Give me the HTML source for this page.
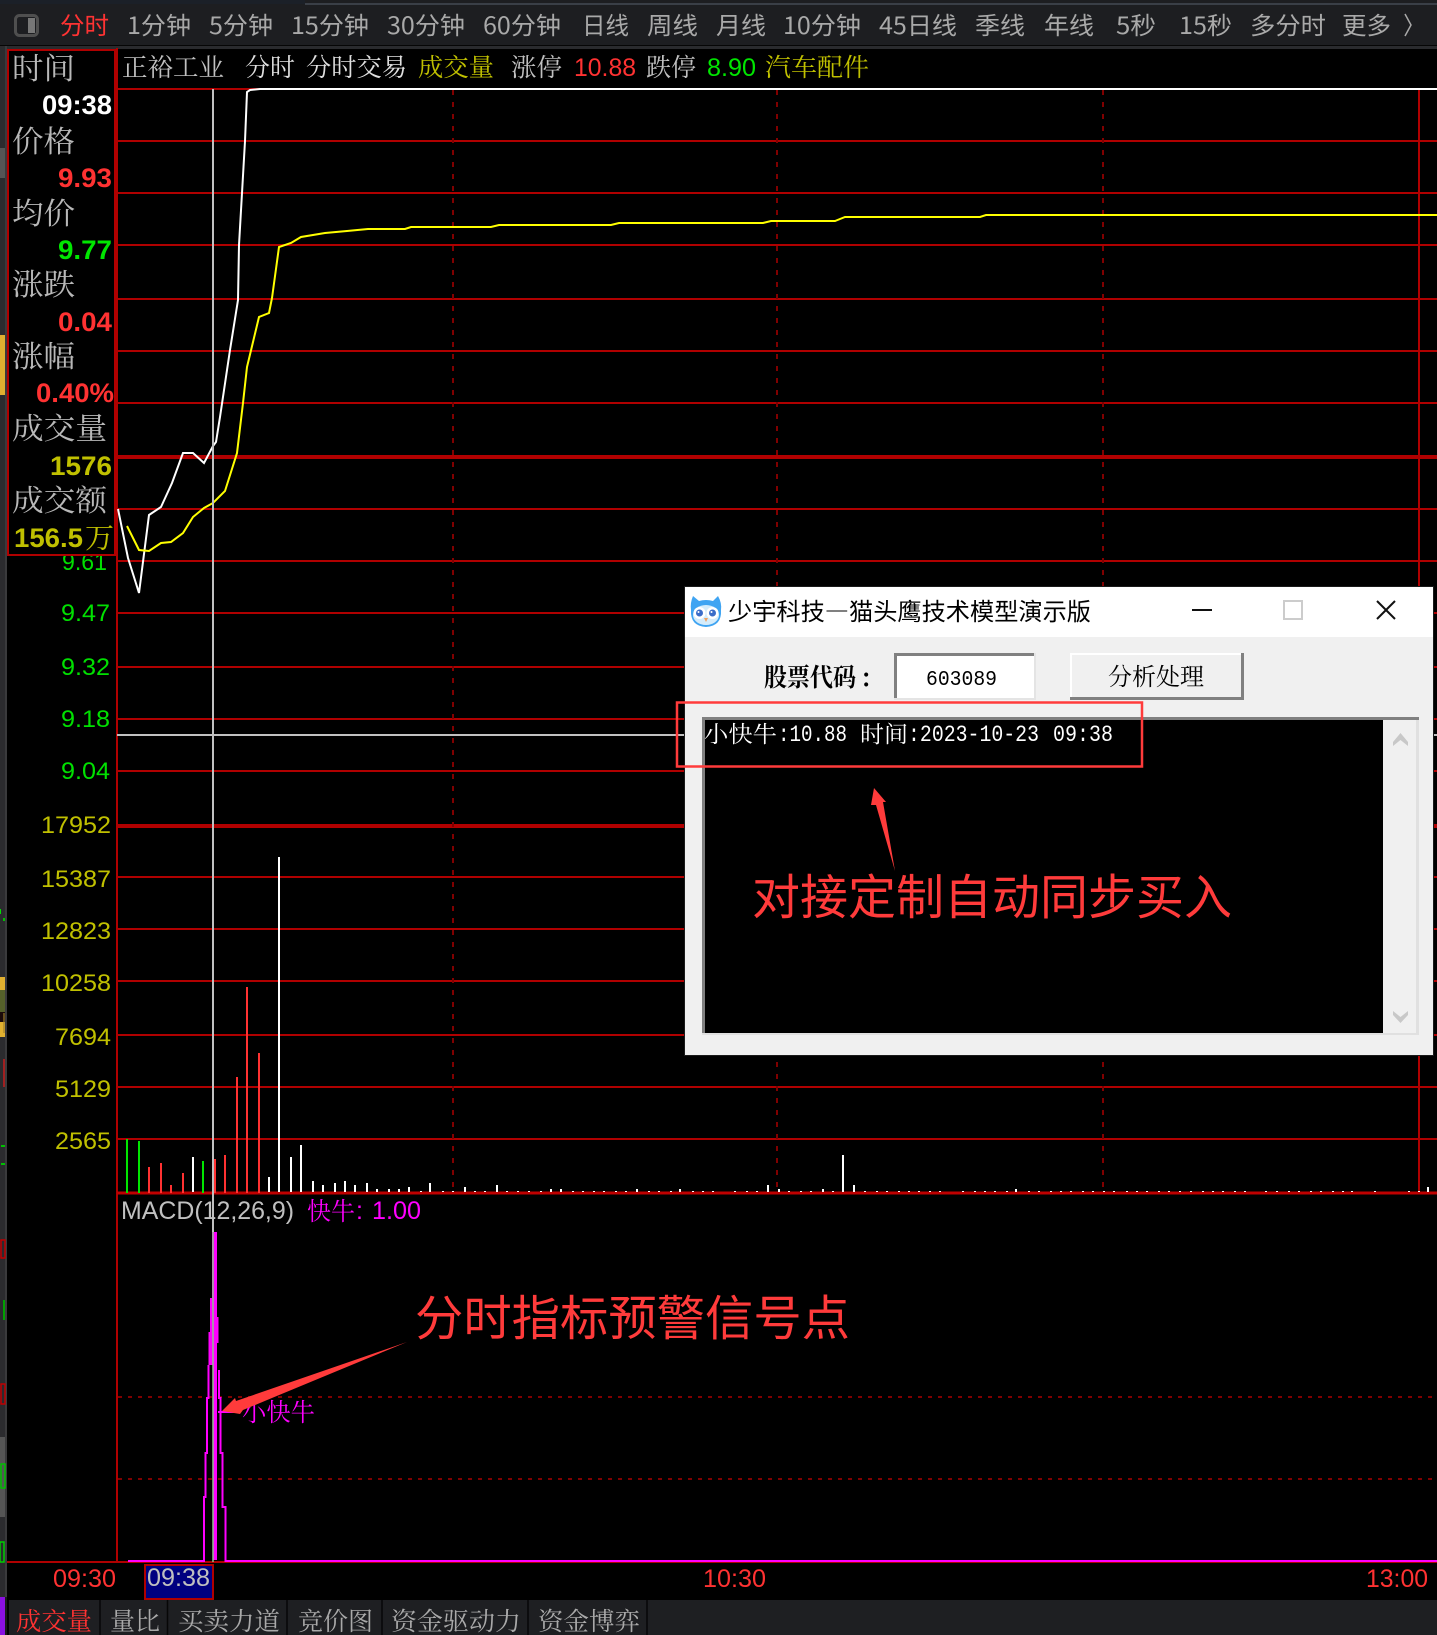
<!DOCTYPE html>
<html lang="zh"><head><meta charset="utf-8"><title>分时</title>
<style>
html,body{margin:0;padding:0;background:#000;width:1437px;height:1635px;overflow:hidden}
svg{display:block}
.s{font-family:"Liberation Sans","Noto Sans CJK SC",sans-serif}
.m{font-family:"Noto Sans CJK SC","WenQuanYi Zen Hei",sans-serif}
.z{font-family:"Noto Serif CJK SC","Noto Sans CJK SC",serif}
.b{font-family:"Liberation Sans",sans-serif;font-weight:bold}
.l{font-family:"Liberation Mono",monospace}
</style></head><body>
<svg xmlns="http://www.w3.org/2000/svg" width="1437" height="1635" viewBox="0 0 1437 1635">
<rect width="1437" height="1635" fill="#000"/>

<!-- toolbar -->
<rect width="1437" height="46" fill="#1d1e21"/>
<rect width="305" height="4" fill="#1b2028"/>
<rect x="305" y="3" width="1132" height="2" fill="#3a3f47"/>
<rect y="45" width="1437" height="1" fill="#060606"/>
<rect y="46" width="1437" height="3" fill="#2a2b2e"/>
<rect x="15.500" y="15.500" width="22" height="20" rx="4" fill="none" stroke="#4f4f4f" stroke-width="3"/>
<rect x="28" y="18" width="7" height="15" fill="#777"/>
<g class="m" font-size="24" fill="#a9a9a9">
<text x="60" y="34" textLength="49" lengthAdjust="spacingAndGlyphs" fill="#ff3333">分时</text>
<text x="127" y="34" textLength="64" lengthAdjust="spacingAndGlyphs">1分钟</text>
<text x="209" y="34" textLength="64" lengthAdjust="spacingAndGlyphs">5分钟</text>
<text x="291" y="34" textLength="78" lengthAdjust="spacingAndGlyphs">15分钟</text>
<text x="387" y="34" textLength="78" lengthAdjust="spacingAndGlyphs">30分钟</text>
<text x="483" y="34" textLength="78" lengthAdjust="spacingAndGlyphs">60分钟</text>
<text x="582" y="34" textLength="47" lengthAdjust="spacingAndGlyphs">日线</text>
<text x="647" y="34" textLength="51" lengthAdjust="spacingAndGlyphs">周线</text>
<text x="716" y="34" textLength="50" lengthAdjust="spacingAndGlyphs">月线</text>
<text x="783" y="34" textLength="78" lengthAdjust="spacingAndGlyphs">10分钟</text>
<text x="879" y="34" textLength="78" lengthAdjust="spacingAndGlyphs">45日线</text>
<text x="975" y="34" textLength="50" lengthAdjust="spacingAndGlyphs">季线</text>
<text x="1044" y="34" textLength="50" lengthAdjust="spacingAndGlyphs">年线</text>
<text x="1116" y="34" textLength="40" lengthAdjust="spacingAndGlyphs">5秒</text>
<text x="1179" y="34" textLength="53" lengthAdjust="spacingAndGlyphs">15秒</text>
<text x="1250" y="34" textLength="76" lengthAdjust="spacingAndGlyphs">多分时</text>
<text x="1342" y="34" textLength="49" lengthAdjust="spacingAndGlyphs">更多</text>
</g>
<path d="M1405 14L1411 25L1405 36" fill="none" stroke="#a9a9a9" stroke-width="1.500"/>

<!-- header row -->
<g font-size="25">
<text class="z" x="122" y="76" textLength="102" lengthAdjust="spacingAndGlyphs" fill="#c0c0c0">正裕工业</text>
<text class="z" x="245" y="76" textLength="50" lengthAdjust="spacingAndGlyphs" fill="#e0e0e0">分时</text>
<text class="z" x="306" y="76" textLength="101" lengthAdjust="spacingAndGlyphs" fill="#e0e0e0">分时交易</text>
<text class="z" x="418" y="76" textLength="76" lengthAdjust="spacingAndGlyphs" fill="#c0c000">成交量</text>
<text class="z" x="511" y="76" textLength="51" lengthAdjust="spacingAndGlyphs" fill="#c0c0c0">涨停</text>
<text class="s" x="574" y="76" textLength="62" lengthAdjust="spacingAndGlyphs" fill="#ff3232">10.88</text>
<text class="z" x="646" y="76" textLength="50" lengthAdjust="spacingAndGlyphs" fill="#c0c0c0">跌停</text>
<text class="s" x="707" y="76" textLength="49" lengthAdjust="spacingAndGlyphs" fill="#00e600">8.90</text>
<text class="z" x="765" y="76" textLength="104" lengthAdjust="spacingAndGlyphs" fill="#c0c000">汽车配件</text>
</g>

<!-- grid -->
<path d="M117 141H1437M117 193H1437M117 245H1437M117 299H1437M117 351H1437M117 403H1437M117 509H1437M117 561H1437M117 613H1437M117 667H1437M117 719H1437M117 771H1437M117 877H1437M117 929H1437M117 981H1437M117 1035H1437M117 1087H1437M117 1139H1437M117 89H260" stroke="#b00000" stroke-width="2" fill="none"/>
<path d="M117 457H1437M117 826H1437" stroke="#b00000" stroke-width="4" fill="none"/>
<path d="M453 90V1190M777 90V1190M1103 90V1190" stroke="#800000" stroke-width="2" stroke-dasharray="5 7" fill="none"/>
<path d="M1419 89V1193" stroke="#b00000" stroke-width="2"/>
<path d="M117 48V1562" stroke="#b00000" stroke-width="2"/>
<path d="M118 1397H1437M118 1479H1437" stroke="#800000" stroke-width="2" stroke-dasharray="4 6" fill="none"/>
<path d="M117 1193H1437" stroke="#c00000" stroke-width="3"/>
<path d="M7 1562H1437" stroke="#b00000" stroke-width="2"/>

<!-- axis labels -->
<g class="s" font-size="24.500" fill="#00e000">
<text x="62" y="570" textLength="45" lengthAdjust="spacingAndGlyphs">9.61</text>
<text x="61" y="621" textLength="49" lengthAdjust="spacingAndGlyphs">9.47</text>
<text x="61" y="675" textLength="49" lengthAdjust="spacingAndGlyphs">9.32</text>
<text x="61" y="727" textLength="49" lengthAdjust="spacingAndGlyphs">9.18</text>
<text x="61" y="779" textLength="49" lengthAdjust="spacingAndGlyphs">9.04</text>
</g>
<g class="s" font-size="24.500" fill="#c0c000">
<text x="41" y="833" textLength="70" lengthAdjust="spacingAndGlyphs">17952</text>
<text x="41" y="887" textLength="70" lengthAdjust="spacingAndGlyphs">15387</text>
<text x="41" y="939" textLength="70" lengthAdjust="spacingAndGlyphs">12823</text>
<text x="41" y="991" textLength="70" lengthAdjust="spacingAndGlyphs">10258</text>
<text x="55" y="1045" textLength="56" lengthAdjust="spacingAndGlyphs">7694</text>
<text x="55" y="1097" textLength="56" lengthAdjust="spacingAndGlyphs">5129</text>
<text x="55" y="1149" textLength="56" lengthAdjust="spacingAndGlyphs">2565</text>
</g>

<!-- volume bars -->
<path d="M127 1139V1193M139 1141V1193M203 1161V1193" stroke="#00e600" stroke-width="2"/>
<path d="M149 1167V1193M161 1163V1193M171 1185V1193M183 1173V1193M215 1159V1193M225 1155V1193M237 1077V1193M247 987V1193M259 1053V1193" stroke="#ff3232" stroke-width="2"/>
<path stroke="#fff" stroke-width="2" d="M193 1157V1192M269 1177V1192M279 857V1192M291 1157V1192M301 1145V1192M313 1181V1192M323 1185V1192M335 1183V1192M345 1181V1192M355 1185V1192M367 1183V1192M377 1189V1192M389 1189V1192M399 1189V1192M409 1187V1192M421 1191V1192M430 1183V1192M443 1191V1192M453 1191V1192M465 1187V1192M475 1191V1192M485 1191V1192M497 1185V1192M507 1191V1192M518 1191V1192M529 1191V1192M541 1191V1192M551 1189V1192M561 1189V1192M573 1191V1192M583 1191V1192M594 1191V1192M604 1191V1192M616 1191V1192M626 1191V1192M637 1189V1192M649 1191V1192M659 1191V1192M671 1191V1192M680 1189V1192M693 1191V1192M703 1191V1192M713 1191V1192M735 1191V1192M747 1191V1192M757 1191V1192M768 1185V1192M779 1189V1192M789 1191V1192M801 1191V1192M811 1191V1192M823 1189V1192M833 1191V1192M843 1155V1192M854 1185V1192M865 1191V1192M877 1191V1192M887 1191V1192M899 1191V1192M909 1191V1192M919 1191V1192M930 1191V1192M940 1191V1192M963 1191V1192M975 1191V1192M985 1191V1192M995 1191V1192M1007 1191V1192M1016 1189V1192M1029 1191V1192M1039 1191V1192M1051 1191V1192M1061 1191V1192M1071 1191V1192M1083 1191V1192M1093 1191V1192M1104 1191V1192M1114 1191V1192M1127 1191V1192M1137 1191V1192M1147 1191V1192M1159 1191V1192M1169 1191V1192M1180 1191V1192M1191 1191V1192M1203 1191V1192M1213 1191V1192M1223 1191V1192M1235 1191V1192M1245 1191V1192M1266 1191V1192M1277 1191V1192M1289 1191V1192M1299 1191V1192M1311 1191V1192M1321 1191V1192M1333 1191V1192M1343 1191V1192M1352 1191V1192M1375 1191V1192M1409 1191V1192M1419 1191V1192M1428 1187V1192"/>

<!-- price lines -->
<path d="M118 509L128 558L139 593L149 515L161 507L172 483L183 453L193 453L204 463L213 446L216 442L220 417L230 350L238 300L239 245L242 193L245 141L247 92L250 90L260 89H1437" fill="none" stroke="#fff" stroke-width="2"/>
<path d="M127 526L139 550L149 551L161 543L171 542L183 533L193 517L204 508L213 503L225 491L237 453L243 403L247 367L259 317L269 313L272 298L279 247L291 243L301 237L325 233L347 231L368 229L405 229L411 227L491 227L499 225L611 225L619 223L763 223L771 221L835 221L845 217L980 217L986 215L1437 215" fill="none" stroke="#ffff00" stroke-width="2"/>

<!-- crosshair upper -->
<path d="M213 89V1232" stroke="#c0c0c0" stroke-width="2"/>
<path d="M117 735H1437" stroke="#c0c0c0" stroke-width="2"/>

<!-- MACD -->
<text class="s" x="121" y="1219" font-size="25" fill="#c0c0c0" textLength="173" lengthAdjust="spacingAndGlyphs">MACD(12,26,9)</text>
<text class="z" x="307" y="1220" font-size="25" fill="#ff00ff" textLength="48" lengthAdjust="spacingAndGlyphs">快牛</text>
<text class="s" x="356" y="1219" font-size="25" fill="#ff00ff">:</text>
<text class="s" x="372" y="1219" font-size="25" fill="#ff00ff" textLength="49" lengthAdjust="spacingAndGlyphs">1.00</text>
<path d="M128 1561H204V1497H205.500V1453H207V1398H208.500V1365" fill="none" stroke="#ff00ff" stroke-width="2"/>
<path d="M212 1232H217V1317H218.500V1343H217V1560H213V1365H208.500V1332H210V1298H212Z" fill="#ff00ff"/>
<path d="M219 1370V1398H220.500V1453H222.500V1507H225.500V1561H1437M218 1412H240" fill="none" stroke="#ff00ff" stroke-width="2"/>
<text class="z" x="242" y="1421" font-size="25" fill="#ff00ff" textLength="73" lengthAdjust="spacingAndGlyphs">小快牛</text>
<path d="M213 1232V1562" stroke="#90c090" stroke-width="1.500"/>

<!-- time axis -->
<text class="s" x="53" y="1587" font-size="25" fill="#ff3232" textLength="63" lengthAdjust="spacingAndGlyphs">09:30</text>
<rect x="145" y="1565" width="68" height="34" fill="#000080" stroke="#b00000" stroke-width="2"/>
<text class="s" x="147" y="1586" font-size="25" fill="#c0c0c0" textLength="63" lengthAdjust="spacingAndGlyphs">09:38</text>
<text class="s" x="703" y="1587" font-size="25" fill="#ff3232" textLength="63" lengthAdjust="spacingAndGlyphs">10:30</text>
<text class="s" x="1366" y="1587" font-size="25" fill="#ff3232" textLength="62" lengthAdjust="spacingAndGlyphs">13:00</text>

<!-- left info panel -->
<rect x="8" y="50" width="107" height="505" fill="#000" stroke="#b00000" stroke-width="2"/>
<g class="z" fill="#b8b8b8" font-size="30">
<text x="12" y="79" textLength="63" lengthAdjust="spacingAndGlyphs">时间</text>
<text x="12" y="152" textLength="63" lengthAdjust="spacingAndGlyphs">价格</text>
<text x="12" y="224" textLength="63" lengthAdjust="spacingAndGlyphs">均价</text>
<text x="12" y="295" textLength="63" lengthAdjust="spacingAndGlyphs">涨跌</text>
<text x="12" y="367" textLength="63" lengthAdjust="spacingAndGlyphs">涨幅</text>
<text x="12" y="439" textLength="95" lengthAdjust="spacingAndGlyphs">成交量</text>
<text x="12" y="511" textLength="95" lengthAdjust="spacingAndGlyphs">成交额</text>
</g>
<g class="b" font-size="27">
<text x="42" y="114" textLength="70" lengthAdjust="spacingAndGlyphs" fill="#fff">09:38</text>
<text x="58" y="187" textLength="54" lengthAdjust="spacingAndGlyphs" fill="#ff3232">9.93</text>
<text x="58" y="259" textLength="54" lengthAdjust="spacingAndGlyphs" fill="#00e600">9.77</text>
<text x="58" y="331" textLength="54" lengthAdjust="spacingAndGlyphs" fill="#ff3232">0.04</text>
<text x="36" y="402" textLength="78" lengthAdjust="spacingAndGlyphs" fill="#ff3232">0.40%</text>
<text x="50" y="475" textLength="62" lengthAdjust="spacingAndGlyphs" fill="#c0c000">1576</text>
<text x="14" y="547" textLength="69" lengthAdjust="spacingAndGlyphs" fill="#c0c000">156.5</text>
</g>
<text class="z" x="85" y="548" font-size="29" fill="#c0c000" textLength="29" lengthAdjust="spacingAndGlyphs">万</text>

<!-- left strip -->
<rect width="7" height="1635" fill="#2b2b2e" y="46"/>
<rect x="5" y="46" width="2" height="1560" fill="#3a3a3c"/>
<rect y="148" width="5" height="30" fill="#555"/>
<rect y="335" width="5" height="60" fill="#e0b030"/>
<rect y="977" width="5" height="60" fill="#e0b030"/>
<rect y="990" width="5" height="28" fill="#55602a"/>
<rect y="1012" width="5" height="10" fill="#1a0a0a"/>
<rect x="3" y="1013" width="2" height="20" fill="#a0802a" opacity=".6"/>
<rect x="3" y="1059" width="2" height="28" fill="#a02020"/>
<rect y="909" width="1" height="5" fill="#00e000"/>
<rect x="3" y="918" width="2" height="3" fill="#00c000"/>
<rect x="1" y="1145" width="4" height="2" fill="#00c000"/>
<rect x="1" y="1163" width="4" height="2" fill="#00c000"/>
<rect x="3" y="1300" width="2" height="20" fill="#00a000"/>
<rect x="1" y="1240" width="4" height="18" fill="none" stroke="#c00000" stroke-width="1.500"/>
<rect x="1" y="1384" width="4" height="20" fill="none" stroke="#c00000" stroke-width="1.500"/>
<rect y="1437" width="5" height="80" fill="#555"/>
<rect x="1" y="1464" width="4" height="24" fill="none" stroke="#00c000" stroke-width="1.500"/>
<rect x="0" y="1542" width="4" height="20" fill="none" stroke="#00d000" stroke-width="1.500"/>
<rect y="1597" width="5" height="38" fill="#8a10e0"/>
<rect y="1597" x="5" width="2" height="38" fill="#1a1a1a"/>

<!-- bottom tabs -->
<rect x="9" y="1600" width="1428" height="35" fill="#1e1f22"/>
<path d="M100 1600V1635M167.500 1600V1635M287 1600V1635M382 1600V1635M528 1600V1635M647 1600V1635" stroke="#070707" stroke-width="1.500"/>
<g class="z" font-size="25" fill="#a9a9a9">
<text x="16" y="1630" textLength="76" lengthAdjust="spacingAndGlyphs" fill="#ff3232">成交量</text>
<text x="110" y="1630" textLength="50" lengthAdjust="spacingAndGlyphs">量比</text>
<text x="178" y="1630" textLength="102" lengthAdjust="spacingAndGlyphs">买卖力道</text>
<text x="298" y="1630" textLength="75" lengthAdjust="spacingAndGlyphs">竞价图</text>
<text x="391" y="1630" textLength="130" lengthAdjust="spacingAndGlyphs">资金驱动力</text>
<text x="538" y="1630" textLength="102" lengthAdjust="spacingAndGlyphs">资金博弈</text>
</g>

<!-- dialog -->
<rect x="684" y="586" width="750" height="470" fill="#1a1a1a"/>
<rect x="685" y="587" width="748" height="468" fill="#f0f0f0"/>
<rect x="685" y="587" width="748" height="50" fill="#fff"/>
<!-- owl -->
<path d="M693 596L699 601Q706 599 713 601L718 596Q722 603 721 610Q722 626 706 627Q690 626 691 610Q690 603 693 596Z" fill="#3fa4f2"/>
<ellipse cx="706" cy="615" rx="13" ry="10" fill="#d4ecfb"/>
<circle cx="699.500" cy="613" r="6" fill="#fff"/><circle cx="712.500" cy="613" r="6" fill="#fff"/>
<circle cx="699.500" cy="613" r="3.500" fill="#3a6cc8"/><circle cx="712.500" cy="613" r="3.500" fill="#3a6cc8"/>
<circle cx="698.500" cy="612" r="1" fill="#fff"/><circle cx="711.500" cy="612" r="1" fill="#fff"/>
<path d="M704 618H708L706 622Z" fill="#f0a060"/>
<text class="m" x="728" y="620" font-size="24" fill="#000" textLength="363" lengthAdjust="spacingAndGlyphs">少宇科技—猫头鹰技术模型演示版</text>
<path d="M1192 610H1212" stroke="#111" stroke-width="2"/>
<rect x="1284" y="601" width="18" height="18" fill="none" stroke="#cccccc" stroke-width="2"/>
<path d="M1377 601L1395 619M1395 601L1377 619" stroke="#111" stroke-width="2"/>

<text class="z" x="764" y="686" font-size="25" fill="#000" font-weight="700" textLength="92" lengthAdjust="spacingAndGlyphs">股票代码</text>
<text class="z" x="862" y="686" font-size="25" font-weight="700" fill="#000">:</text>
<rect x="894" y="653" width="142" height="47" fill="#e4e4e4"/>
<rect x="894" y="653" width="140" height="45" fill="#808080"/>
<rect x="897" y="656" width="137" height="42" fill="#fff"/>
<text class="l" x="926" y="685" font-size="21" fill="#000" textLength="71" lengthAdjust="spacingAndGlyphs">603089</text>

<rect x="1070" y="653" width="174" height="47" fill="#808080"/>
<rect x="1070" y="653" width="171" height="44" fill="#fff"/>
<rect x="1072" y="655" width="169" height="42" fill="#f0f0f0"/>
<text class="z" x="1108" y="685" font-size="24" fill="#000" textLength="96" lengthAdjust="spacingAndGlyphs">分析处理</text>

<rect x="702" y="717" width="717" height="318" fill="#e0e0e0"/>
<rect x="702" y="717" width="717" height="3" fill="#808080"/>
<rect x="702" y="717" width="3" height="316" fill="#808080"/>
<rect x="705" y="720" width="678" height="313" fill="#000"/>
<rect x="1383" y="720" width="33" height="313" fill="#f0f0f0"/>
<path d="M1400.500 733L1408 742V746L1400.500 740L1393 746V742Z" fill="#c8c8c8"/>
<path d="M1393 1011L1400.500 1017L1408 1011V1015L1400.500 1023L1393 1015Z" fill="#c8c8c8"/>

<g fill="#fff" font-size="23">
<text class="z" x="704" y="742" textLength="73" lengthAdjust="spacingAndGlyphs">小快牛</text>
<text class="l" x="778" y="741" textLength="69" lengthAdjust="spacingAndGlyphs">:10.88</text>
<text class="z" x="860" y="742" textLength="48" lengthAdjust="spacingAndGlyphs">时间</text>
<text class="l" x="908" y="741" textLength="131" lengthAdjust="spacingAndGlyphs">:2023-10-23</text>
<text class="l" x="1053" y="741" textLength="60" lengthAdjust="spacingAndGlyphs">09:38</text>
</g>

<!-- annotations -->
<rect x="677" y="702.500" width="465" height="64" fill="none" stroke="#ff3b3b" stroke-width="2.500"/>
<path d="M874 788L886 802L883 802L895 871L876 805L871 805Z" fill="#ff3b3b"/>
<text class="m" x="752" y="914" font-size="48" fill="#ff3b3b" textLength="480" lengthAdjust="spacingAndGlyphs">对接定制自动同步买入</text>
<path d="M222 1411L235 1398L236 1401L407 1342L243 1410L240 1414Z" fill="#ff3b3b"/>
<text class="m" x="415" y="1335" font-size="48" fill="#ff3b3b" textLength="435" lengthAdjust="spacingAndGlyphs">分时指标预警信号点</text>
</svg>
</body></html>
